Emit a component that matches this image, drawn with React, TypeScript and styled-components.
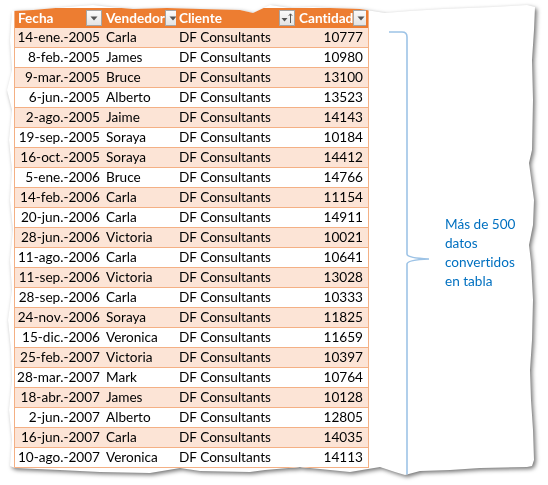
import React from "react";
import styled, { createGlobalStyle } from "styled-components";

const Global = createGlobalStyle`
  html, body { margin: 0; padding: 0; background: #ffffff; }
  body { width: 548px; height: 485px; overflow: hidden; }
`;

const FONT = `"Lato", "Liberation Sans", sans-serif`;

const TORN = `polygon(
  12px 11px, 33px 10px, 67px 7px, 80px 6px, 93px 5px, 110px 7px, 133px 9px, 167px 8px, 200px 9px,
  240px 10px, 253px 13px, 270px 5px, 290px 8px, 313px 7px, 330px 8px, 360px 9px,
  385px 13px, 410px 11px, 443px 9px, 493px 7px, 527px 5px, 535px 7px,
  534px 30px, 532px 60px, 533px 100px, 532px 150px, 529px 163px, 534px 200px, 533px 225px,
  529px 245px, 531px 262px, 533px 300px, 532px 340px, 530px 370px, 531px 400px, 533px 430px,
  534px 460px, 532px 466px, 527px 467px, 480px 468px, 450px 470px, 420px 471px, 405px 475px,
  395px 472px, 380px 467px, 350px 472px, 330px 470px, 300px 467px, 265px 470px, 250px 472px,
  200px 471px, 180px 468px, 150px 473px, 100px 472px, 60px 470px, 15px 468px, 10px 466px,
  12px 440px, 9px 410px, 12px 380px, 11px 350px, 8px 320px, 12px 290px, 10px 260px,
  13px 230px, 10px 200px, 12px 170px, 9px 140px, 12px 110px, 7px 90px, 12px 70px, 10px 40px
)`;

const Shadow = styled.div`
  width: 548px;
  height: 485px;
  filter: drop-shadow(2px 2px 2px rgba(0, 0, 0, 0.55));
`;

const Paper = styled.div`
  width: 548px;
  height: 485px;
  box-sizing: border-box;
  background: #ffffff;
  clip-path: ${TORN};
  padding: 8px 0 0 14px;
  display: flex;
  align-items: flex-start;
  font-family: ${FONT};
  font-size: 13.6px;
  font-variant-ligatures: none;
  color: #000;
`;

const Table = styled.div`
  width: 353px;
  border-left: 1px solid #f4b084;
  border-right: 1px solid #f4b084;
  display: flex;
  flex-direction: column;
`;

const COLS = "88px 73px 120px 70px";

const HeadRow = styled.div`
  display: grid;
  grid-template-columns: ${COLS};
  height: 20px;
  background: #ed7d31;
`;

const HeadCell = styled.div`
  display: flex;
  align-items: center;
  justify-content: space-between;
  padding: 0 1px 0 3px;
  color: #ffffff;
  font-weight: 700;
  overflow: hidden;
  white-space: nowrap;
`;

const FilterBtn = styled.span`
  width: 16px;
  height: 16px;
  box-sizing: border-box;
  flex: none;
  border: 1px solid #a6a6a6;
  background: linear-gradient(#fbfbfb, #e4e4e4);
  display: flex;
  align-items: center;
  justify-content: center;
`;

const Row = styled.div<{ $alt: boolean }>`
  display: grid;
  grid-template-columns: ${COLS};
  height: 20px;
  box-sizing: border-box;
  border-bottom: 1px solid #f4b084;
  background: ${(p) => (p.$alt ? "#fce4d6" : "#ffffff")};
`;

const Cell = styled.div<{ $right?: boolean }>`
  display: flex;
  align-items: center;
  justify-content: ${(p) => (p.$right ? "flex-end" : "flex-start")};
  padding: 0 3px;
  white-space: nowrap;
  overflow: hidden;
  line-height: 19px;
`;

const Annotation = styled.div`
  display: flex;
  align-items: flex-start;
  padding-left: 18px;
`;

const Brace = styled.svg`
  display: block;
  flex: none;
  margin-top: 20px;
`;

const Note = styled.div`
  margin: 207px 0 0 8px;
  color: #0070c0;
  line-height: 19px;
`;

const Tri = () => (
  <svg width="8" height="5" viewBox="0 0 8 5">
    <path d="M0.5 0.5 H7.5 L4 4.5 Z" fill="#555" />
  </svg>
);

const SortTri = () => (
  <svg width="12" height="12" viewBox="0 0 12 12">
    <path d="M0.5 6 H6.5 L3.5 9.5 Z" fill="#555" />
    <path d="M9.5 11 V2 M7.8 3.8 L9.5 1.8 L11.2 3.8" stroke="#555" strokeWidth="1" fill="none" />
  </svg>
);

const rows: [string, string, string][] = [
  ["14-ene.-2005", "Carla", "10777"],
  ["8-feb.-2005", "James", "10980"],
  ["9-mar.-2005", "Bruce", "13100"],
  ["6-jun.-2005", "Alberto", "13523"],
  ["2-ago.-2005", "Jaime", "14143"],
  ["19-sep.-2005", "Soraya", "10184"],
  ["16-oct.-2005", "Soraya", "14412"],
  ["5-ene.-2006", "Bruce", "14766"],
  ["14-feb.-2006", "Carla", "11154"],
  ["20-jun.-2006", "Carla", "14911"],
  ["28-jun.-2006", "Victoria", "10021"],
  ["11-ago.-2006", "Carla", "10641"],
  ["11-sep.-2006", "Victoria", "13028"],
  ["28-sep.-2006", "Carla", "10333"],
  ["24-nov.-2006", "Soraya", "11825"],
  ["15-dic.-2006", "Veronica", "11659"],
  ["25-feb.-2007", "Victoria", "10397"],
  ["28-mar.-2007", "Mark", "10764"],
  ["18-abr.-2007", "James", "10128"],
  ["2-jun.-2007", "Alberto", "12805"],
  ["16-jun.-2007", "Carla", "14035"],
  ["10-ago.-2007", "Veronica", "14113"],
];

export default function App() {
  return (
    <>
      <Global />
      <Shadow>
        <Paper>
          <Table>
            <HeadRow>
              <HeadCell>
                Fecha
                <FilterBtn>
                  <Tri />
                </FilterBtn>
              </HeadCell>
              <HeadCell>
                Vendedor
                <FilterBtn>
                  <Tri />
                </FilterBtn>
              </HeadCell>
              <HeadCell>
                Cliente
                <FilterBtn>
                  <SortTri />
                </FilterBtn>
              </HeadCell>
              <HeadCell>
                Cantidad
                <FilterBtn>
                  <Tri />
                </FilterBtn>
              </HeadCell>
            </HeadRow>
            {rows.map(([d, v, c], i) => (
              <Row key={i} $alt={i % 2 === 0}>
                <Cell $right>{d}</Cell>
                <Cell>{v}</Cell>
                <Cell>DF Consultants</Cell>
                <Cell $right>{c}</Cell>
              </Row>
            ))}
          </Table>
          <Annotation>
            <Brace width="50" height="460" viewBox="0 0 50 460">
              <path
                d="M2 4 H15 Q20 4 20 9 V226 Q20 230 42 231 Q20 232 20 236 V460"
                fill="none"
                stroke="#9dc3e6"
                strokeWidth="1.6"
              />
            </Brace>
            <Note>
              Más de 500
              <br />
              datos
              <br />
              convertidos
              <br />
              en tabla
            </Note>
          </Annotation>
        </Paper>
      </Shadow>
    </>
  );
}
